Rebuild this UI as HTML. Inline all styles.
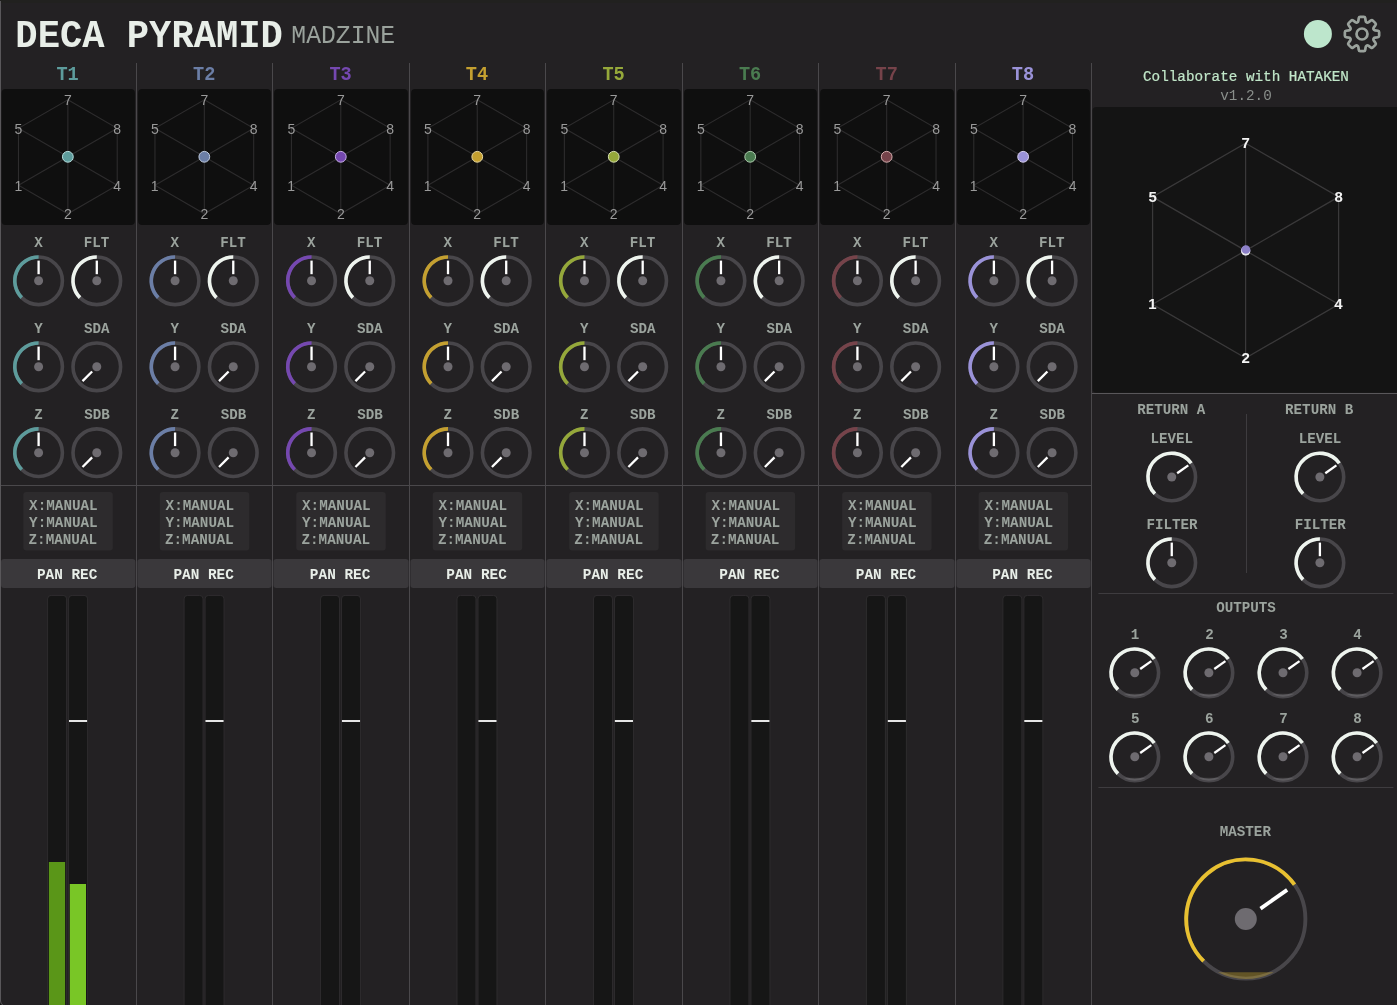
<!DOCTYPE html><html><head><meta charset="utf-8"><style>html,body{margin:0;padding:0;background:#232123;overflow:hidden;width:1397px;height:1005px}svg{display:block;will-change:transform}</style></head><body><svg width="1397" height="1005" viewBox="0 0 1397 1005"><rect x="0" y="0" width="1397" height="1005" fill="#232123"/><rect x="0" y="0" width="1397" height="3" fill="#21211f"/><path d="M0 1001 Q0.5 1005 3 1005 H0Z" fill="#111"/><path d="M0.5 1 V1001 Q0.8 1004.6 3 1005.2" fill="none" stroke="#59575a" stroke-width="1"/><text transform="translate(15.35 46.80) scale(1 1.046)" font-family="Liberation Mono" font-size="37.16" font-weight="bold" fill="#e8eee8">DECA PYRAMID</text><text transform="translate(291.34 42.90) scale(1 1.050)" font-family="Liberation Mono" font-size="24.72" font-weight="normal" fill="#9aa29c">MADZINE</text><circle cx="1317.9" cy="34" r="14" fill="#bde6cc"/><path d="M1357.50 22.37Q1358.14 22.11 1358.33 20.93L1358.79 18.05Q1358.98 16.86 1360.18 16.86L1363.82 16.86Q1365.02 16.86 1365.21 18.05L1365.67 20.93Q1365.86 22.11 1366.50 22.37L1367.04 22.60Q1367.67 22.86 1368.65 22.16L1371.01 20.45Q1371.98 19.75 1372.83 20.60L1375.40 23.17Q1376.25 24.02 1375.55 24.99L1373.84 27.35Q1373.14 28.33 1373.40 28.96L1373.63 29.50Q1373.89 30.14 1375.07 30.33L1377.95 30.79Q1379.14 30.98 1379.14 32.18L1379.14 35.82Q1379.14 37.02 1377.95 37.21L1375.07 37.67Q1373.89 37.86 1373.63 38.50L1373.40 39.04Q1373.14 39.67 1373.84 40.65L1375.55 43.01Q1376.25 43.98 1375.40 44.83L1372.83 47.40Q1371.98 48.25 1371.01 47.55L1368.65 45.84Q1367.67 45.14 1367.04 45.40L1366.50 45.63Q1365.86 45.89 1365.67 47.07L1365.21 49.95Q1365.02 51.14 1363.82 51.14L1360.18 51.14Q1358.98 51.14 1358.79 49.95L1358.33 47.07Q1358.14 45.89 1357.50 45.63L1356.96 45.40Q1356.33 45.14 1355.35 45.84L1352.99 47.55Q1352.02 48.25 1351.17 47.40L1348.60 44.83Q1347.75 43.98 1348.45 43.01L1350.16 40.65Q1350.86 39.67 1350.60 39.04L1350.37 38.50Q1350.11 37.86 1348.93 37.67L1346.05 37.21Q1344.86 37.02 1344.86 35.82L1344.86 32.18Q1344.86 30.98 1346.05 30.79L1348.93 30.33Q1350.11 30.14 1350.37 29.50L1350.60 28.96Q1350.86 28.33 1350.16 27.35L1348.45 24.99Q1347.75 24.02 1348.60 23.17L1351.17 20.60Q1352.02 19.75 1352.99 20.45L1355.35 22.16Q1356.33 22.86 1356.96 22.60Z" fill="none" stroke="#9aa29c" stroke-width="2.7" stroke-linejoin="round"/><circle cx="1362" cy="34" r="5.5" fill="none" stroke="#9aa29c" stroke-width="2.7"/><rect x="136" y="63" width="1" height="942" fill="#4a484b"/><text transform="translate(56.46 79.80) scale(1.0 1.070)" font-family="Liberation Mono" font-size="18.60" font-weight="bold" fill="#5d9c9c" >T1</text><rect x="1.60" y="89" width="133.30" height="136" rx="4" fill="#0f0f0f"/><polygon points="67.85,99.80 117.21,128.30 117.21,185.30 67.85,213.80 18.49,185.30 18.49,128.30" fill="none" stroke="#2d2c2d" stroke-width="1.1"/><line x1="67.85" y1="156.80" x2="67.85" y2="99.80" stroke="#2d2c2d" stroke-width="1.1"/><line x1="67.85" y1="156.80" x2="117.21" y2="128.30" stroke="#2d2c2d" stroke-width="1.1"/><line x1="67.85" y1="156.80" x2="117.21" y2="185.30" stroke="#2d2c2d" stroke-width="1.1"/><line x1="67.85" y1="156.80" x2="67.85" y2="213.80" stroke="#2d2c2d" stroke-width="1.1"/><line x1="67.85" y1="156.80" x2="18.49" y2="185.30" stroke="#2d2c2d" stroke-width="1.1"/><line x1="67.85" y1="156.80" x2="18.49" y2="128.30" stroke="#2d2c2d" stroke-width="1.1"/><text transform="translate(63.95 105.12) scale(1.0 1.000)" font-family="Liberation Sans" font-size="14.00" font-weight="normal" fill="#9a9a9a" >7</text><text transform="translate(113.32 133.62) scale(1.0 1.000)" font-family="Liberation Sans" font-size="14.00" font-weight="normal" fill="#9a9a9a" >8</text><text transform="translate(113.36 190.62) scale(1.0 1.000)" font-family="Liberation Sans" font-size="14.00" font-weight="normal" fill="#9a9a9a" >4</text><text transform="translate(63.96 219.12) scale(1.0 1.000)" font-family="Liberation Sans" font-size="14.00" font-weight="normal" fill="#9a9a9a" >2</text><text transform="translate(14.40 190.62) scale(1.0 1.000)" font-family="Liberation Sans" font-size="14.00" font-weight="normal" fill="#9a9a9a" >1</text><text transform="translate(14.61 133.62) scale(1.0 1.000)" font-family="Liberation Sans" font-size="14.00" font-weight="normal" fill="#9a9a9a" >5</text><circle cx="67.85" cy="156.80" r="5.4" fill="#5d9c9c" stroke="#b8e0e0" stroke-width="1"/><text transform="translate(34.14 246.80) scale(1.0 1.060)" font-family="Liberation Mono" font-size="14.20" font-weight="bold" fill="#9ba39d" >X</text><text transform="translate(83.80 246.80) scale(1.0 1.060)" font-family="Liberation Mono" font-size="14.20" font-weight="bold" fill="#9ba39d" >FLT</text><circle cx="38.60" cy="280.80" r="23.8" fill="none" stroke="#48464a" stroke-width="3.6"/><path d="M21.77 297.63A23.8 23.8 0 0 1 38.60 257.00" fill="none" stroke="#5d9c9c" stroke-width="3.6"/><line x1="38.60" y1="274.20" x2="38.60" y2="260.60" stroke="#fff" stroke-width="2.3"/><circle cx="38.60" cy="280.80" r="4.5" fill="#6e6b70"/><circle cx="96.80" cy="280.80" r="23.8" fill="none" stroke="#48464a" stroke-width="3.6"/><path d="M79.97 297.63A23.8 23.8 0 0 1 96.80 257.00" fill="none" stroke="#eef4ee" stroke-width="3.6"/><line x1="96.80" y1="274.20" x2="96.80" y2="260.60" stroke="#fff" stroke-width="2.3"/><circle cx="96.80" cy="280.80" r="4.5" fill="#6e6b70"/><text transform="translate(34.14 332.80) scale(1.0 1.060)" font-family="Liberation Mono" font-size="14.20" font-weight="bold" fill="#9ba39d" >Y</text><text transform="translate(84.04 332.80) scale(1.0 1.060)" font-family="Liberation Mono" font-size="14.20" font-weight="bold" fill="#9ba39d" >SDA</text><circle cx="38.60" cy="366.80" r="23.8" fill="none" stroke="#48464a" stroke-width="3.6"/><path d="M21.77 383.63A23.8 23.8 0 0 1 38.60 343.00" fill="none" stroke="#5d9c9c" stroke-width="3.6"/><line x1="38.60" y1="360.20" x2="38.60" y2="346.60" stroke="#fff" stroke-width="2.3"/><circle cx="38.60" cy="366.80" r="4.5" fill="#6e6b70"/><circle cx="96.80" cy="366.80" r="23.8" fill="none" stroke="#48464a" stroke-width="3.6"/><line x1="92.13" y1="371.47" x2="82.52" y2="381.08" stroke="#fff" stroke-width="2.3"/><circle cx="96.80" cy="366.80" r="4.5" fill="#6e6b70"/><text transform="translate(34.15 418.80) scale(1.0 1.060)" font-family="Liberation Mono" font-size="14.20" font-weight="bold" fill="#9ba39d" >Z</text><text transform="translate(84.19 418.80) scale(1.0 1.060)" font-family="Liberation Mono" font-size="14.20" font-weight="bold" fill="#9ba39d" >SDB</text><circle cx="38.60" cy="452.70" r="23.8" fill="none" stroke="#48464a" stroke-width="3.6"/><path d="M21.77 469.53A23.8 23.8 0 0 1 38.60 428.90" fill="none" stroke="#5d9c9c" stroke-width="3.6"/><line x1="38.60" y1="446.10" x2="38.60" y2="432.50" stroke="#fff" stroke-width="2.3"/><circle cx="38.60" cy="452.70" r="4.5" fill="#6e6b70"/><circle cx="96.80" cy="452.70" r="23.8" fill="none" stroke="#48464a" stroke-width="3.6"/><line x1="92.13" y1="457.37" x2="82.52" y2="466.98" stroke="#fff" stroke-width="2.3"/><circle cx="96.80" cy="452.70" r="4.5" fill="#6e6b70"/><rect x="23.30" y="492" width="89.5" height="58.5" rx="3" fill="#2d2b2d"/><text transform="translate(29.10 510.10) scale(1.0 1.070)" font-family="Liberation Mono" font-size="14.30" font-weight="bold" fill="#9ba39d" >X:MANUAL</text><text transform="translate(29.08 527.15) scale(1.0 1.070)" font-family="Liberation Mono" font-size="14.30" font-weight="bold" fill="#9ba39d" >Y:MANUAL</text><text transform="translate(28.49 544.20) scale(1.0 1.070)" font-family="Liberation Mono" font-size="14.30" font-weight="bold" fill="#9ba39d" >Z:MANUAL</text><rect x="1.00" y="559" width="134.40" height="29" rx="3" fill="#3a383b"/><text transform="translate(36.93 578.90) scale(1.0 1.030)" font-family="Liberation Mono" font-size="14.40" font-weight="bold" fill="#e8eee8" >PAN REC</text><rect x="47.60" y="595.4" width="19" height="420" rx="3.5" fill="#161616" stroke="#2e2c2e" stroke-width="1"/><rect x="68.60" y="595.4" width="19" height="420" rx="3.5" fill="#161616" stroke="#2e2c2e" stroke-width="1"/><rect x="69.00" y="720" width="18.1" height="2" fill="#e6e6e6"/><rect x="272" y="63" width="1" height="942" fill="#4a484b"/><text transform="translate(193.08 79.80) scale(1.0 1.070)" font-family="Liberation Mono" font-size="18.60" font-weight="bold" fill="#6b7ea6" >T2</text><rect x="138.10" y="89" width="132.80" height="136" rx="4" fill="#0f0f0f"/><polygon points="204.32,99.80 253.68,128.30 253.68,185.30 204.32,213.80 154.96,185.30 154.96,128.30" fill="none" stroke="#2d2c2d" stroke-width="1.1"/><line x1="204.32" y1="156.80" x2="204.32" y2="99.80" stroke="#2d2c2d" stroke-width="1.1"/><line x1="204.32" y1="156.80" x2="253.68" y2="128.30" stroke="#2d2c2d" stroke-width="1.1"/><line x1="204.32" y1="156.80" x2="253.68" y2="185.30" stroke="#2d2c2d" stroke-width="1.1"/><line x1="204.32" y1="156.80" x2="204.32" y2="213.80" stroke="#2d2c2d" stroke-width="1.1"/><line x1="204.32" y1="156.80" x2="154.96" y2="185.30" stroke="#2d2c2d" stroke-width="1.1"/><line x1="204.32" y1="156.80" x2="154.96" y2="128.30" stroke="#2d2c2d" stroke-width="1.1"/><text transform="translate(200.42 105.12) scale(1.0 1.000)" font-family="Liberation Sans" font-size="14.00" font-weight="normal" fill="#9a9a9a" >7</text><text transform="translate(249.79 133.62) scale(1.0 1.000)" font-family="Liberation Sans" font-size="14.00" font-weight="normal" fill="#9a9a9a" >8</text><text transform="translate(249.83 190.62) scale(1.0 1.000)" font-family="Liberation Sans" font-size="14.00" font-weight="normal" fill="#9a9a9a" >4</text><text transform="translate(200.43 219.12) scale(1.0 1.000)" font-family="Liberation Sans" font-size="14.00" font-weight="normal" fill="#9a9a9a" >2</text><text transform="translate(150.87 190.62) scale(1.0 1.000)" font-family="Liberation Sans" font-size="14.00" font-weight="normal" fill="#9a9a9a" >1</text><text transform="translate(151.08 133.62) scale(1.0 1.000)" font-family="Liberation Sans" font-size="14.00" font-weight="normal" fill="#9a9a9a" >5</text><circle cx="204.32" cy="156.80" r="5.4" fill="#6b7ea6" stroke="#c0cce0" stroke-width="1"/><text transform="translate(170.61 246.80) scale(1.0 1.060)" font-family="Liberation Mono" font-size="14.20" font-weight="bold" fill="#9ba39d" >X</text><text transform="translate(220.27 246.80) scale(1.0 1.060)" font-family="Liberation Mono" font-size="14.20" font-weight="bold" fill="#9ba39d" >FLT</text><circle cx="175.07" cy="280.80" r="23.8" fill="none" stroke="#48464a" stroke-width="3.6"/><path d="M158.24 297.63A23.8 23.8 0 0 1 175.07 257.00" fill="none" stroke="#6b7ea6" stroke-width="3.6"/><line x1="175.07" y1="274.20" x2="175.07" y2="260.60" stroke="#fff" stroke-width="2.3"/><circle cx="175.07" cy="280.80" r="4.5" fill="#6e6b70"/><circle cx="233.27" cy="280.80" r="23.8" fill="none" stroke="#48464a" stroke-width="3.6"/><path d="M216.44 297.63A23.8 23.8 0 0 1 233.27 257.00" fill="none" stroke="#eef4ee" stroke-width="3.6"/><line x1="233.27" y1="274.20" x2="233.27" y2="260.60" stroke="#fff" stroke-width="2.3"/><circle cx="233.27" cy="280.80" r="4.5" fill="#6e6b70"/><text transform="translate(170.61 332.80) scale(1.0 1.060)" font-family="Liberation Mono" font-size="14.20" font-weight="bold" fill="#9ba39d" >Y</text><text transform="translate(220.51 332.80) scale(1.0 1.060)" font-family="Liberation Mono" font-size="14.20" font-weight="bold" fill="#9ba39d" >SDA</text><circle cx="175.07" cy="366.80" r="23.8" fill="none" stroke="#48464a" stroke-width="3.6"/><path d="M158.24 383.63A23.8 23.8 0 0 1 175.07 343.00" fill="none" stroke="#6b7ea6" stroke-width="3.6"/><line x1="175.07" y1="360.20" x2="175.07" y2="346.60" stroke="#fff" stroke-width="2.3"/><circle cx="175.07" cy="366.80" r="4.5" fill="#6e6b70"/><circle cx="233.27" cy="366.80" r="23.8" fill="none" stroke="#48464a" stroke-width="3.6"/><line x1="228.60" y1="371.47" x2="218.99" y2="381.08" stroke="#fff" stroke-width="2.3"/><circle cx="233.27" cy="366.80" r="4.5" fill="#6e6b70"/><text transform="translate(170.62 418.80) scale(1.0 1.060)" font-family="Liberation Mono" font-size="14.20" font-weight="bold" fill="#9ba39d" >Z</text><text transform="translate(220.66 418.80) scale(1.0 1.060)" font-family="Liberation Mono" font-size="14.20" font-weight="bold" fill="#9ba39d" >SDB</text><circle cx="175.07" cy="452.70" r="23.8" fill="none" stroke="#48464a" stroke-width="3.6"/><path d="M158.24 469.53A23.8 23.8 0 0 1 175.07 428.90" fill="none" stroke="#6b7ea6" stroke-width="3.6"/><line x1="175.07" y1="446.10" x2="175.07" y2="432.50" stroke="#fff" stroke-width="2.3"/><circle cx="175.07" cy="452.70" r="4.5" fill="#6e6b70"/><circle cx="233.27" cy="452.70" r="23.8" fill="none" stroke="#48464a" stroke-width="3.6"/><line x1="228.60" y1="457.37" x2="218.99" y2="466.98" stroke="#fff" stroke-width="2.3"/><circle cx="233.27" cy="452.70" r="4.5" fill="#6e6b70"/><rect x="159.77" y="492" width="89.5" height="58.5" rx="3" fill="#2d2b2d"/><text transform="translate(165.57 510.10) scale(1.0 1.070)" font-family="Liberation Mono" font-size="14.30" font-weight="bold" fill="#9ba39d" >X:MANUAL</text><text transform="translate(165.55 527.15) scale(1.0 1.070)" font-family="Liberation Mono" font-size="14.30" font-weight="bold" fill="#9ba39d" >Y:MANUAL</text><text transform="translate(164.96 544.20) scale(1.0 1.070)" font-family="Liberation Mono" font-size="14.30" font-weight="bold" fill="#9ba39d" >Z:MANUAL</text><rect x="137.40" y="559" width="134.20" height="29" rx="3" fill="#3a383b"/><text transform="translate(173.40 578.90) scale(1.0 1.030)" font-family="Liberation Mono" font-size="14.40" font-weight="bold" fill="#e8eee8" >PAN REC</text><rect x="184.07" y="595.4" width="19" height="420" rx="3.5" fill="#161616" stroke="#2e2c2e" stroke-width="1"/><rect x="205.07" y="595.4" width="19" height="420" rx="3.5" fill="#161616" stroke="#2e2c2e" stroke-width="1"/><rect x="205.47" y="720" width="18.1" height="2" fill="#e6e6e6"/><rect x="409" y="63" width="1" height="942" fill="#4a484b"/><text transform="translate(329.47 79.80) scale(1.0 1.070)" font-family="Liberation Mono" font-size="18.60" font-weight="bold" fill="#7548b0" >T3</text><rect x="274.10" y="89" width="133.80" height="136" rx="4" fill="#0f0f0f"/><polygon points="340.79,99.80 390.15,128.30 390.15,185.30 340.79,213.80 291.43,185.30 291.43,128.30" fill="none" stroke="#2d2c2d" stroke-width="1.1"/><line x1="340.79" y1="156.80" x2="340.79" y2="99.80" stroke="#2d2c2d" stroke-width="1.1"/><line x1="340.79" y1="156.80" x2="390.15" y2="128.30" stroke="#2d2c2d" stroke-width="1.1"/><line x1="340.79" y1="156.80" x2="390.15" y2="185.30" stroke="#2d2c2d" stroke-width="1.1"/><line x1="340.79" y1="156.80" x2="340.79" y2="213.80" stroke="#2d2c2d" stroke-width="1.1"/><line x1="340.79" y1="156.80" x2="291.43" y2="185.30" stroke="#2d2c2d" stroke-width="1.1"/><line x1="340.79" y1="156.80" x2="291.43" y2="128.30" stroke="#2d2c2d" stroke-width="1.1"/><text transform="translate(336.89 105.12) scale(1.0 1.000)" font-family="Liberation Sans" font-size="14.00" font-weight="normal" fill="#9a9a9a" >7</text><text transform="translate(386.26 133.62) scale(1.0 1.000)" font-family="Liberation Sans" font-size="14.00" font-weight="normal" fill="#9a9a9a" >8</text><text transform="translate(386.30 190.62) scale(1.0 1.000)" font-family="Liberation Sans" font-size="14.00" font-weight="normal" fill="#9a9a9a" >4</text><text transform="translate(336.90 219.12) scale(1.0 1.000)" font-family="Liberation Sans" font-size="14.00" font-weight="normal" fill="#9a9a9a" >2</text><text transform="translate(287.34 190.62) scale(1.0 1.000)" font-family="Liberation Sans" font-size="14.00" font-weight="normal" fill="#9a9a9a" >1</text><text transform="translate(287.55 133.62) scale(1.0 1.000)" font-family="Liberation Sans" font-size="14.00" font-weight="normal" fill="#9a9a9a" >5</text><circle cx="340.79" cy="156.80" r="5.4" fill="#7548b0" stroke="#c8b0e8" stroke-width="1"/><text transform="translate(307.08 246.80) scale(1.0 1.060)" font-family="Liberation Mono" font-size="14.20" font-weight="bold" fill="#9ba39d" >X</text><text transform="translate(356.74 246.80) scale(1.0 1.060)" font-family="Liberation Mono" font-size="14.20" font-weight="bold" fill="#9ba39d" >FLT</text><circle cx="311.54" cy="280.80" r="23.8" fill="none" stroke="#48464a" stroke-width="3.6"/><path d="M294.71 297.63A23.8 23.8 0 0 1 311.54 257.00" fill="none" stroke="#7548b0" stroke-width="3.6"/><line x1="311.54" y1="274.20" x2="311.54" y2="260.60" stroke="#fff" stroke-width="2.3"/><circle cx="311.54" cy="280.80" r="4.5" fill="#6e6b70"/><circle cx="369.74" cy="280.80" r="23.8" fill="none" stroke="#48464a" stroke-width="3.6"/><path d="M352.91 297.63A23.8 23.8 0 0 1 369.74 257.00" fill="none" stroke="#eef4ee" stroke-width="3.6"/><line x1="369.74" y1="274.20" x2="369.74" y2="260.60" stroke="#fff" stroke-width="2.3"/><circle cx="369.74" cy="280.80" r="4.5" fill="#6e6b70"/><text transform="translate(307.08 332.80) scale(1.0 1.060)" font-family="Liberation Mono" font-size="14.20" font-weight="bold" fill="#9ba39d" >Y</text><text transform="translate(356.98 332.80) scale(1.0 1.060)" font-family="Liberation Mono" font-size="14.20" font-weight="bold" fill="#9ba39d" >SDA</text><circle cx="311.54" cy="366.80" r="23.8" fill="none" stroke="#48464a" stroke-width="3.6"/><path d="M294.71 383.63A23.8 23.8 0 0 1 311.54 343.00" fill="none" stroke="#7548b0" stroke-width="3.6"/><line x1="311.54" y1="360.20" x2="311.54" y2="346.60" stroke="#fff" stroke-width="2.3"/><circle cx="311.54" cy="366.80" r="4.5" fill="#6e6b70"/><circle cx="369.74" cy="366.80" r="23.8" fill="none" stroke="#48464a" stroke-width="3.6"/><line x1="365.07" y1="371.47" x2="355.46" y2="381.08" stroke="#fff" stroke-width="2.3"/><circle cx="369.74" cy="366.80" r="4.5" fill="#6e6b70"/><text transform="translate(307.09 418.80) scale(1.0 1.060)" font-family="Liberation Mono" font-size="14.20" font-weight="bold" fill="#9ba39d" >Z</text><text transform="translate(357.13 418.80) scale(1.0 1.060)" font-family="Liberation Mono" font-size="14.20" font-weight="bold" fill="#9ba39d" >SDB</text><circle cx="311.54" cy="452.70" r="23.8" fill="none" stroke="#48464a" stroke-width="3.6"/><path d="M294.71 469.53A23.8 23.8 0 0 1 311.54 428.90" fill="none" stroke="#7548b0" stroke-width="3.6"/><line x1="311.54" y1="446.10" x2="311.54" y2="432.50" stroke="#fff" stroke-width="2.3"/><circle cx="311.54" cy="452.70" r="4.5" fill="#6e6b70"/><circle cx="369.74" cy="452.70" r="23.8" fill="none" stroke="#48464a" stroke-width="3.6"/><line x1="365.07" y1="457.37" x2="355.46" y2="466.98" stroke="#fff" stroke-width="2.3"/><circle cx="369.74" cy="452.70" r="4.5" fill="#6e6b70"/><rect x="296.24" y="492" width="89.5" height="58.5" rx="3" fill="#2d2b2d"/><text transform="translate(302.04 510.10) scale(1.0 1.070)" font-family="Liberation Mono" font-size="14.30" font-weight="bold" fill="#9ba39d" >X:MANUAL</text><text transform="translate(302.02 527.15) scale(1.0 1.070)" font-family="Liberation Mono" font-size="14.30" font-weight="bold" fill="#9ba39d" >Y:MANUAL</text><text transform="translate(301.43 544.20) scale(1.0 1.070)" font-family="Liberation Mono" font-size="14.30" font-weight="bold" fill="#9ba39d" >Z:MANUAL</text><rect x="273.40" y="559" width="135.20" height="29" rx="3" fill="#3a383b"/><text transform="translate(309.87 578.90) scale(1.0 1.030)" font-family="Liberation Mono" font-size="14.40" font-weight="bold" fill="#e8eee8" >PAN REC</text><rect x="320.54" y="595.4" width="19" height="420" rx="3.5" fill="#161616" stroke="#2e2c2e" stroke-width="1"/><rect x="341.54" y="595.4" width="19" height="420" rx="3.5" fill="#161616" stroke="#2e2c2e" stroke-width="1"/><rect x="341.94" y="720" width="18.1" height="2" fill="#e6e6e6"/><rect x="545" y="63" width="1" height="942" fill="#4a484b"/><text transform="translate(465.75 79.80) scale(1.0 1.070)" font-family="Liberation Mono" font-size="18.60" font-weight="bold" fill="#c4a030" >T4</text><rect x="411.10" y="89" width="132.80" height="136" rx="4" fill="#0f0f0f"/><polygon points="477.26,99.80 526.62,128.30 526.62,185.30 477.26,213.80 427.90,185.30 427.90,128.30" fill="none" stroke="#2d2c2d" stroke-width="1.1"/><line x1="477.26" y1="156.80" x2="477.26" y2="99.80" stroke="#2d2c2d" stroke-width="1.1"/><line x1="477.26" y1="156.80" x2="526.62" y2="128.30" stroke="#2d2c2d" stroke-width="1.1"/><line x1="477.26" y1="156.80" x2="526.62" y2="185.30" stroke="#2d2c2d" stroke-width="1.1"/><line x1="477.26" y1="156.80" x2="477.26" y2="213.80" stroke="#2d2c2d" stroke-width="1.1"/><line x1="477.26" y1="156.80" x2="427.90" y2="185.30" stroke="#2d2c2d" stroke-width="1.1"/><line x1="477.26" y1="156.80" x2="427.90" y2="128.30" stroke="#2d2c2d" stroke-width="1.1"/><text transform="translate(473.36 105.12) scale(1.0 1.000)" font-family="Liberation Sans" font-size="14.00" font-weight="normal" fill="#9a9a9a" >7</text><text transform="translate(522.73 133.62) scale(1.0 1.000)" font-family="Liberation Sans" font-size="14.00" font-weight="normal" fill="#9a9a9a" >8</text><text transform="translate(522.77 190.62) scale(1.0 1.000)" font-family="Liberation Sans" font-size="14.00" font-weight="normal" fill="#9a9a9a" >4</text><text transform="translate(473.37 219.12) scale(1.0 1.000)" font-family="Liberation Sans" font-size="14.00" font-weight="normal" fill="#9a9a9a" >2</text><text transform="translate(423.81 190.62) scale(1.0 1.000)" font-family="Liberation Sans" font-size="14.00" font-weight="normal" fill="#9a9a9a" >1</text><text transform="translate(424.02 133.62) scale(1.0 1.000)" font-family="Liberation Sans" font-size="14.00" font-weight="normal" fill="#9a9a9a" >5</text><circle cx="477.26" cy="156.80" r="5.4" fill="#c4a030" stroke="#e8d8a0" stroke-width="1"/><text transform="translate(443.55 246.80) scale(1.0 1.060)" font-family="Liberation Mono" font-size="14.20" font-weight="bold" fill="#9ba39d" >X</text><text transform="translate(493.21 246.80) scale(1.0 1.060)" font-family="Liberation Mono" font-size="14.20" font-weight="bold" fill="#9ba39d" >FLT</text><circle cx="448.01" cy="280.80" r="23.8" fill="none" stroke="#48464a" stroke-width="3.6"/><path d="M431.18 297.63A23.8 23.8 0 0 1 448.01 257.00" fill="none" stroke="#c4a030" stroke-width="3.6"/><line x1="448.01" y1="274.20" x2="448.01" y2="260.60" stroke="#fff" stroke-width="2.3"/><circle cx="448.01" cy="280.80" r="4.5" fill="#6e6b70"/><circle cx="506.21" cy="280.80" r="23.8" fill="none" stroke="#48464a" stroke-width="3.6"/><path d="M489.38 297.63A23.8 23.8 0 0 1 506.21 257.00" fill="none" stroke="#eef4ee" stroke-width="3.6"/><line x1="506.21" y1="274.20" x2="506.21" y2="260.60" stroke="#fff" stroke-width="2.3"/><circle cx="506.21" cy="280.80" r="4.5" fill="#6e6b70"/><text transform="translate(443.55 332.80) scale(1.0 1.060)" font-family="Liberation Mono" font-size="14.20" font-weight="bold" fill="#9ba39d" >Y</text><text transform="translate(493.45 332.80) scale(1.0 1.060)" font-family="Liberation Mono" font-size="14.20" font-weight="bold" fill="#9ba39d" >SDA</text><circle cx="448.01" cy="366.80" r="23.8" fill="none" stroke="#48464a" stroke-width="3.6"/><path d="M431.18 383.63A23.8 23.8 0 0 1 448.01 343.00" fill="none" stroke="#c4a030" stroke-width="3.6"/><line x1="448.01" y1="360.20" x2="448.01" y2="346.60" stroke="#fff" stroke-width="2.3"/><circle cx="448.01" cy="366.80" r="4.5" fill="#6e6b70"/><circle cx="506.21" cy="366.80" r="23.8" fill="none" stroke="#48464a" stroke-width="3.6"/><line x1="501.54" y1="371.47" x2="491.93" y2="381.08" stroke="#fff" stroke-width="2.3"/><circle cx="506.21" cy="366.80" r="4.5" fill="#6e6b70"/><text transform="translate(443.56 418.80) scale(1.0 1.060)" font-family="Liberation Mono" font-size="14.20" font-weight="bold" fill="#9ba39d" >Z</text><text transform="translate(493.60 418.80) scale(1.0 1.060)" font-family="Liberation Mono" font-size="14.20" font-weight="bold" fill="#9ba39d" >SDB</text><circle cx="448.01" cy="452.70" r="23.8" fill="none" stroke="#48464a" stroke-width="3.6"/><path d="M431.18 469.53A23.8 23.8 0 0 1 448.01 428.90" fill="none" stroke="#c4a030" stroke-width="3.6"/><line x1="448.01" y1="446.10" x2="448.01" y2="432.50" stroke="#fff" stroke-width="2.3"/><circle cx="448.01" cy="452.70" r="4.5" fill="#6e6b70"/><circle cx="506.21" cy="452.70" r="23.8" fill="none" stroke="#48464a" stroke-width="3.6"/><line x1="501.54" y1="457.37" x2="491.93" y2="466.98" stroke="#fff" stroke-width="2.3"/><circle cx="506.21" cy="452.70" r="4.5" fill="#6e6b70"/><rect x="432.71" y="492" width="89.5" height="58.5" rx="3" fill="#2d2b2d"/><text transform="translate(438.51 510.10) scale(1.0 1.070)" font-family="Liberation Mono" font-size="14.30" font-weight="bold" fill="#9ba39d" >X:MANUAL</text><text transform="translate(438.49 527.15) scale(1.0 1.070)" font-family="Liberation Mono" font-size="14.30" font-weight="bold" fill="#9ba39d" >Y:MANUAL</text><text transform="translate(437.90 544.20) scale(1.0 1.070)" font-family="Liberation Mono" font-size="14.30" font-weight="bold" fill="#9ba39d" >Z:MANUAL</text><rect x="410.40" y="559" width="134.20" height="29" rx="3" fill="#3a383b"/><text transform="translate(446.34 578.90) scale(1.0 1.030)" font-family="Liberation Mono" font-size="14.40" font-weight="bold" fill="#e8eee8" >PAN REC</text><rect x="457.01" y="595.4" width="19" height="420" rx="3.5" fill="#161616" stroke="#2e2c2e" stroke-width="1"/><rect x="478.01" y="595.4" width="19" height="420" rx="3.5" fill="#161616" stroke="#2e2c2e" stroke-width="1"/><rect x="478.41" y="720" width="18.1" height="2" fill="#e6e6e6"/><rect x="682" y="63" width="1" height="942" fill="#4a484b"/><text transform="translate(602.42 79.80) scale(1.0 1.070)" font-family="Liberation Mono" font-size="18.60" font-weight="bold" fill="#95a83a" >T5</text><rect x="547.10" y="89" width="133.80" height="136" rx="4" fill="#0f0f0f"/><polygon points="613.73,99.80 663.09,128.30 663.09,185.30 613.73,213.80 564.37,185.30 564.37,128.30" fill="none" stroke="#2d2c2d" stroke-width="1.1"/><line x1="613.73" y1="156.80" x2="613.73" y2="99.80" stroke="#2d2c2d" stroke-width="1.1"/><line x1="613.73" y1="156.80" x2="663.09" y2="128.30" stroke="#2d2c2d" stroke-width="1.1"/><line x1="613.73" y1="156.80" x2="663.09" y2="185.30" stroke="#2d2c2d" stroke-width="1.1"/><line x1="613.73" y1="156.80" x2="613.73" y2="213.80" stroke="#2d2c2d" stroke-width="1.1"/><line x1="613.73" y1="156.80" x2="564.37" y2="185.30" stroke="#2d2c2d" stroke-width="1.1"/><line x1="613.73" y1="156.80" x2="564.37" y2="128.30" stroke="#2d2c2d" stroke-width="1.1"/><text transform="translate(609.83 105.12) scale(1.0 1.000)" font-family="Liberation Sans" font-size="14.00" font-weight="normal" fill="#9a9a9a" >7</text><text transform="translate(659.20 133.62) scale(1.0 1.000)" font-family="Liberation Sans" font-size="14.00" font-weight="normal" fill="#9a9a9a" >8</text><text transform="translate(659.24 190.62) scale(1.0 1.000)" font-family="Liberation Sans" font-size="14.00" font-weight="normal" fill="#9a9a9a" >4</text><text transform="translate(609.84 219.12) scale(1.0 1.000)" font-family="Liberation Sans" font-size="14.00" font-weight="normal" fill="#9a9a9a" >2</text><text transform="translate(560.28 190.62) scale(1.0 1.000)" font-family="Liberation Sans" font-size="14.00" font-weight="normal" fill="#9a9a9a" >1</text><text transform="translate(560.49 133.62) scale(1.0 1.000)" font-family="Liberation Sans" font-size="14.00" font-weight="normal" fill="#9a9a9a" >5</text><circle cx="613.73" cy="156.80" r="5.4" fill="#95a83a" stroke="#d8e0b0" stroke-width="1"/><text transform="translate(580.02 246.80) scale(1.0 1.060)" font-family="Liberation Mono" font-size="14.20" font-weight="bold" fill="#9ba39d" >X</text><text transform="translate(629.68 246.80) scale(1.0 1.060)" font-family="Liberation Mono" font-size="14.20" font-weight="bold" fill="#9ba39d" >FLT</text><circle cx="584.48" cy="280.80" r="23.8" fill="none" stroke="#48464a" stroke-width="3.6"/><path d="M567.65 297.63A23.8 23.8 0 0 1 584.48 257.00" fill="none" stroke="#95a83a" stroke-width="3.6"/><line x1="584.48" y1="274.20" x2="584.48" y2="260.60" stroke="#fff" stroke-width="2.3"/><circle cx="584.48" cy="280.80" r="4.5" fill="#6e6b70"/><circle cx="642.68" cy="280.80" r="23.8" fill="none" stroke="#48464a" stroke-width="3.6"/><path d="M625.85 297.63A23.8 23.8 0 0 1 642.68 257.00" fill="none" stroke="#eef4ee" stroke-width="3.6"/><line x1="642.68" y1="274.20" x2="642.68" y2="260.60" stroke="#fff" stroke-width="2.3"/><circle cx="642.68" cy="280.80" r="4.5" fill="#6e6b70"/><text transform="translate(580.02 332.80) scale(1.0 1.060)" font-family="Liberation Mono" font-size="14.20" font-weight="bold" fill="#9ba39d" >Y</text><text transform="translate(629.92 332.80) scale(1.0 1.060)" font-family="Liberation Mono" font-size="14.20" font-weight="bold" fill="#9ba39d" >SDA</text><circle cx="584.48" cy="366.80" r="23.8" fill="none" stroke="#48464a" stroke-width="3.6"/><path d="M567.65 383.63A23.8 23.8 0 0 1 584.48 343.00" fill="none" stroke="#95a83a" stroke-width="3.6"/><line x1="584.48" y1="360.20" x2="584.48" y2="346.60" stroke="#fff" stroke-width="2.3"/><circle cx="584.48" cy="366.80" r="4.5" fill="#6e6b70"/><circle cx="642.68" cy="366.80" r="23.8" fill="none" stroke="#48464a" stroke-width="3.6"/><line x1="638.01" y1="371.47" x2="628.40" y2="381.08" stroke="#fff" stroke-width="2.3"/><circle cx="642.68" cy="366.80" r="4.5" fill="#6e6b70"/><text transform="translate(580.03 418.80) scale(1.0 1.060)" font-family="Liberation Mono" font-size="14.20" font-weight="bold" fill="#9ba39d" >Z</text><text transform="translate(630.07 418.80) scale(1.0 1.060)" font-family="Liberation Mono" font-size="14.20" font-weight="bold" fill="#9ba39d" >SDB</text><circle cx="584.48" cy="452.70" r="23.8" fill="none" stroke="#48464a" stroke-width="3.6"/><path d="M567.65 469.53A23.8 23.8 0 0 1 584.48 428.90" fill="none" stroke="#95a83a" stroke-width="3.6"/><line x1="584.48" y1="446.10" x2="584.48" y2="432.50" stroke="#fff" stroke-width="2.3"/><circle cx="584.48" cy="452.70" r="4.5" fill="#6e6b70"/><circle cx="642.68" cy="452.70" r="23.8" fill="none" stroke="#48464a" stroke-width="3.6"/><line x1="638.01" y1="457.37" x2="628.40" y2="466.98" stroke="#fff" stroke-width="2.3"/><circle cx="642.68" cy="452.70" r="4.5" fill="#6e6b70"/><rect x="569.18" y="492" width="89.5" height="58.5" rx="3" fill="#2d2b2d"/><text transform="translate(574.98 510.10) scale(1.0 1.070)" font-family="Liberation Mono" font-size="14.30" font-weight="bold" fill="#9ba39d" >X:MANUAL</text><text transform="translate(574.96 527.15) scale(1.0 1.070)" font-family="Liberation Mono" font-size="14.30" font-weight="bold" fill="#9ba39d" >Y:MANUAL</text><text transform="translate(574.37 544.20) scale(1.0 1.070)" font-family="Liberation Mono" font-size="14.30" font-weight="bold" fill="#9ba39d" >Z:MANUAL</text><rect x="546.40" y="559" width="135.20" height="29" rx="3" fill="#3a383b"/><text transform="translate(582.81 578.90) scale(1.0 1.030)" font-family="Liberation Mono" font-size="14.40" font-weight="bold" fill="#e8eee8" >PAN REC</text><rect x="593.48" y="595.4" width="19" height="420" rx="3.5" fill="#161616" stroke="#2e2c2e" stroke-width="1"/><rect x="614.48" y="595.4" width="19" height="420" rx="3.5" fill="#161616" stroke="#2e2c2e" stroke-width="1"/><rect x="614.88" y="720" width="18.1" height="2" fill="#e6e6e6"/><rect x="818" y="63" width="1" height="942" fill="#4a484b"/><text transform="translate(738.93 79.80) scale(1.0 1.070)" font-family="Liberation Mono" font-size="18.60" font-weight="bold" fill="#4a7b50" >T6</text><rect x="684.10" y="89" width="132.80" height="136" rx="4" fill="#0f0f0f"/><polygon points="750.20,99.80 799.56,128.30 799.56,185.30 750.20,213.80 700.84,185.30 700.84,128.30" fill="none" stroke="#2d2c2d" stroke-width="1.1"/><line x1="750.20" y1="156.80" x2="750.20" y2="99.80" stroke="#2d2c2d" stroke-width="1.1"/><line x1="750.20" y1="156.80" x2="799.56" y2="128.30" stroke="#2d2c2d" stroke-width="1.1"/><line x1="750.20" y1="156.80" x2="799.56" y2="185.30" stroke="#2d2c2d" stroke-width="1.1"/><line x1="750.20" y1="156.80" x2="750.20" y2="213.80" stroke="#2d2c2d" stroke-width="1.1"/><line x1="750.20" y1="156.80" x2="700.84" y2="185.30" stroke="#2d2c2d" stroke-width="1.1"/><line x1="750.20" y1="156.80" x2="700.84" y2="128.30" stroke="#2d2c2d" stroke-width="1.1"/><text transform="translate(746.30 105.12) scale(1.0 1.000)" font-family="Liberation Sans" font-size="14.00" font-weight="normal" fill="#9a9a9a" >7</text><text transform="translate(795.67 133.62) scale(1.0 1.000)" font-family="Liberation Sans" font-size="14.00" font-weight="normal" fill="#9a9a9a" >8</text><text transform="translate(795.71 190.62) scale(1.0 1.000)" font-family="Liberation Sans" font-size="14.00" font-weight="normal" fill="#9a9a9a" >4</text><text transform="translate(746.31 219.12) scale(1.0 1.000)" font-family="Liberation Sans" font-size="14.00" font-weight="normal" fill="#9a9a9a" >2</text><text transform="translate(696.75 190.62) scale(1.0 1.000)" font-family="Liberation Sans" font-size="14.00" font-weight="normal" fill="#9a9a9a" >1</text><text transform="translate(696.96 133.62) scale(1.0 1.000)" font-family="Liberation Sans" font-size="14.00" font-weight="normal" fill="#9a9a9a" >5</text><circle cx="750.20" cy="156.80" r="5.4" fill="#4a7b50" stroke="#b0d0b0" stroke-width="1"/><text transform="translate(716.49 246.80) scale(1.0 1.060)" font-family="Liberation Mono" font-size="14.20" font-weight="bold" fill="#9ba39d" >X</text><text transform="translate(766.15 246.80) scale(1.0 1.060)" font-family="Liberation Mono" font-size="14.20" font-weight="bold" fill="#9ba39d" >FLT</text><circle cx="720.95" cy="280.80" r="23.8" fill="none" stroke="#48464a" stroke-width="3.6"/><path d="M704.12 297.63A23.8 23.8 0 0 1 720.95 257.00" fill="none" stroke="#4a7b50" stroke-width="3.6"/><line x1="720.95" y1="274.20" x2="720.95" y2="260.60" stroke="#fff" stroke-width="2.3"/><circle cx="720.95" cy="280.80" r="4.5" fill="#6e6b70"/><circle cx="779.15" cy="280.80" r="23.8" fill="none" stroke="#48464a" stroke-width="3.6"/><path d="M762.32 297.63A23.8 23.8 0 0 1 779.15 257.00" fill="none" stroke="#eef4ee" stroke-width="3.6"/><line x1="779.15" y1="274.20" x2="779.15" y2="260.60" stroke="#fff" stroke-width="2.3"/><circle cx="779.15" cy="280.80" r="4.5" fill="#6e6b70"/><text transform="translate(716.49 332.80) scale(1.0 1.060)" font-family="Liberation Mono" font-size="14.20" font-weight="bold" fill="#9ba39d" >Y</text><text transform="translate(766.39 332.80) scale(1.0 1.060)" font-family="Liberation Mono" font-size="14.20" font-weight="bold" fill="#9ba39d" >SDA</text><circle cx="720.95" cy="366.80" r="23.8" fill="none" stroke="#48464a" stroke-width="3.6"/><path d="M704.12 383.63A23.8 23.8 0 0 1 720.95 343.00" fill="none" stroke="#4a7b50" stroke-width="3.6"/><line x1="720.95" y1="360.20" x2="720.95" y2="346.60" stroke="#fff" stroke-width="2.3"/><circle cx="720.95" cy="366.80" r="4.5" fill="#6e6b70"/><circle cx="779.15" cy="366.80" r="23.8" fill="none" stroke="#48464a" stroke-width="3.6"/><line x1="774.48" y1="371.47" x2="764.87" y2="381.08" stroke="#fff" stroke-width="2.3"/><circle cx="779.15" cy="366.80" r="4.5" fill="#6e6b70"/><text transform="translate(716.50 418.80) scale(1.0 1.060)" font-family="Liberation Mono" font-size="14.20" font-weight="bold" fill="#9ba39d" >Z</text><text transform="translate(766.54 418.80) scale(1.0 1.060)" font-family="Liberation Mono" font-size="14.20" font-weight="bold" fill="#9ba39d" >SDB</text><circle cx="720.95" cy="452.70" r="23.8" fill="none" stroke="#48464a" stroke-width="3.6"/><path d="M704.12 469.53A23.8 23.8 0 0 1 720.95 428.90" fill="none" stroke="#4a7b50" stroke-width="3.6"/><line x1="720.95" y1="446.10" x2="720.95" y2="432.50" stroke="#fff" stroke-width="2.3"/><circle cx="720.95" cy="452.70" r="4.5" fill="#6e6b70"/><circle cx="779.15" cy="452.70" r="23.8" fill="none" stroke="#48464a" stroke-width="3.6"/><line x1="774.48" y1="457.37" x2="764.87" y2="466.98" stroke="#fff" stroke-width="2.3"/><circle cx="779.15" cy="452.70" r="4.5" fill="#6e6b70"/><rect x="705.65" y="492" width="89.5" height="58.5" rx="3" fill="#2d2b2d"/><text transform="translate(711.45 510.10) scale(1.0 1.070)" font-family="Liberation Mono" font-size="14.30" font-weight="bold" fill="#9ba39d" >X:MANUAL</text><text transform="translate(711.43 527.15) scale(1.0 1.070)" font-family="Liberation Mono" font-size="14.30" font-weight="bold" fill="#9ba39d" >Y:MANUAL</text><text transform="translate(710.84 544.20) scale(1.0 1.070)" font-family="Liberation Mono" font-size="14.30" font-weight="bold" fill="#9ba39d" >Z:MANUAL</text><rect x="683.40" y="559" width="134.20" height="29" rx="3" fill="#3a383b"/><text transform="translate(719.28 578.90) scale(1.0 1.030)" font-family="Liberation Mono" font-size="14.40" font-weight="bold" fill="#e8eee8" >PAN REC</text><rect x="729.95" y="595.4" width="19" height="420" rx="3.5" fill="#161616" stroke="#2e2c2e" stroke-width="1"/><rect x="750.95" y="595.4" width="19" height="420" rx="3.5" fill="#161616" stroke="#2e2c2e" stroke-width="1"/><rect x="751.35" y="720" width="18.1" height="2" fill="#e6e6e6"/><rect x="955" y="63" width="1" height="942" fill="#4a484b"/><text transform="translate(875.50 79.80) scale(1.0 1.070)" font-family="Liberation Mono" font-size="18.60" font-weight="bold" fill="#76434a" >T7</text><rect x="820.10" y="89" width="133.80" height="136" rx="4" fill="#0f0f0f"/><polygon points="886.67,99.80 936.03,128.30 936.03,185.30 886.67,213.80 837.31,185.30 837.31,128.30" fill="none" stroke="#2d2c2d" stroke-width="1.1"/><line x1="886.67" y1="156.80" x2="886.67" y2="99.80" stroke="#2d2c2d" stroke-width="1.1"/><line x1="886.67" y1="156.80" x2="936.03" y2="128.30" stroke="#2d2c2d" stroke-width="1.1"/><line x1="886.67" y1="156.80" x2="936.03" y2="185.30" stroke="#2d2c2d" stroke-width="1.1"/><line x1="886.67" y1="156.80" x2="886.67" y2="213.80" stroke="#2d2c2d" stroke-width="1.1"/><line x1="886.67" y1="156.80" x2="837.31" y2="185.30" stroke="#2d2c2d" stroke-width="1.1"/><line x1="886.67" y1="156.80" x2="837.31" y2="128.30" stroke="#2d2c2d" stroke-width="1.1"/><text transform="translate(882.77 105.12) scale(1.0 1.000)" font-family="Liberation Sans" font-size="14.00" font-weight="normal" fill="#9a9a9a" >7</text><text transform="translate(932.14 133.62) scale(1.0 1.000)" font-family="Liberation Sans" font-size="14.00" font-weight="normal" fill="#9a9a9a" >8</text><text transform="translate(932.18 190.62) scale(1.0 1.000)" font-family="Liberation Sans" font-size="14.00" font-weight="normal" fill="#9a9a9a" >4</text><text transform="translate(882.78 219.12) scale(1.0 1.000)" font-family="Liberation Sans" font-size="14.00" font-weight="normal" fill="#9a9a9a" >2</text><text transform="translate(833.22 190.62) scale(1.0 1.000)" font-family="Liberation Sans" font-size="14.00" font-weight="normal" fill="#9a9a9a" >1</text><text transform="translate(833.43 133.62) scale(1.0 1.000)" font-family="Liberation Sans" font-size="14.00" font-weight="normal" fill="#9a9a9a" >5</text><circle cx="886.67" cy="156.80" r="5.4" fill="#76434a" stroke="#d8b0b0" stroke-width="1"/><text transform="translate(852.96 246.80) scale(1.0 1.060)" font-family="Liberation Mono" font-size="14.20" font-weight="bold" fill="#9ba39d" >X</text><text transform="translate(902.62 246.80) scale(1.0 1.060)" font-family="Liberation Mono" font-size="14.20" font-weight="bold" fill="#9ba39d" >FLT</text><circle cx="857.42" cy="280.80" r="23.8" fill="none" stroke="#48464a" stroke-width="3.6"/><path d="M840.59 297.63A23.8 23.8 0 0 1 857.42 257.00" fill="none" stroke="#76434a" stroke-width="3.6"/><line x1="857.42" y1="274.20" x2="857.42" y2="260.60" stroke="#fff" stroke-width="2.3"/><circle cx="857.42" cy="280.80" r="4.5" fill="#6e6b70"/><circle cx="915.62" cy="280.80" r="23.8" fill="none" stroke="#48464a" stroke-width="3.6"/><path d="M898.79 297.63A23.8 23.8 0 0 1 915.62 257.00" fill="none" stroke="#eef4ee" stroke-width="3.6"/><line x1="915.62" y1="274.20" x2="915.62" y2="260.60" stroke="#fff" stroke-width="2.3"/><circle cx="915.62" cy="280.80" r="4.5" fill="#6e6b70"/><text transform="translate(852.96 332.80) scale(1.0 1.060)" font-family="Liberation Mono" font-size="14.20" font-weight="bold" fill="#9ba39d" >Y</text><text transform="translate(902.86 332.80) scale(1.0 1.060)" font-family="Liberation Mono" font-size="14.20" font-weight="bold" fill="#9ba39d" >SDA</text><circle cx="857.42" cy="366.80" r="23.8" fill="none" stroke="#48464a" stroke-width="3.6"/><path d="M840.59 383.63A23.8 23.8 0 0 1 857.42 343.00" fill="none" stroke="#76434a" stroke-width="3.6"/><line x1="857.42" y1="360.20" x2="857.42" y2="346.60" stroke="#fff" stroke-width="2.3"/><circle cx="857.42" cy="366.80" r="4.5" fill="#6e6b70"/><circle cx="915.62" cy="366.80" r="23.8" fill="none" stroke="#48464a" stroke-width="3.6"/><line x1="910.95" y1="371.47" x2="901.34" y2="381.08" stroke="#fff" stroke-width="2.3"/><circle cx="915.62" cy="366.80" r="4.5" fill="#6e6b70"/><text transform="translate(852.97 418.80) scale(1.0 1.060)" font-family="Liberation Mono" font-size="14.20" font-weight="bold" fill="#9ba39d" >Z</text><text transform="translate(903.01 418.80) scale(1.0 1.060)" font-family="Liberation Mono" font-size="14.20" font-weight="bold" fill="#9ba39d" >SDB</text><circle cx="857.42" cy="452.70" r="23.8" fill="none" stroke="#48464a" stroke-width="3.6"/><path d="M840.59 469.53A23.8 23.8 0 0 1 857.42 428.90" fill="none" stroke="#76434a" stroke-width="3.6"/><line x1="857.42" y1="446.10" x2="857.42" y2="432.50" stroke="#fff" stroke-width="2.3"/><circle cx="857.42" cy="452.70" r="4.5" fill="#6e6b70"/><circle cx="915.62" cy="452.70" r="23.8" fill="none" stroke="#48464a" stroke-width="3.6"/><line x1="910.95" y1="457.37" x2="901.34" y2="466.98" stroke="#fff" stroke-width="2.3"/><circle cx="915.62" cy="452.70" r="4.5" fill="#6e6b70"/><rect x="842.12" y="492" width="89.5" height="58.5" rx="3" fill="#2d2b2d"/><text transform="translate(847.92 510.10) scale(1.0 1.070)" font-family="Liberation Mono" font-size="14.30" font-weight="bold" fill="#9ba39d" >X:MANUAL</text><text transform="translate(847.90 527.15) scale(1.0 1.070)" font-family="Liberation Mono" font-size="14.30" font-weight="bold" fill="#9ba39d" >Y:MANUAL</text><text transform="translate(847.31 544.20) scale(1.0 1.070)" font-family="Liberation Mono" font-size="14.30" font-weight="bold" fill="#9ba39d" >Z:MANUAL</text><rect x="819.40" y="559" width="135.20" height="29" rx="3" fill="#3a383b"/><text transform="translate(855.75 578.90) scale(1.0 1.030)" font-family="Liberation Mono" font-size="14.40" font-weight="bold" fill="#e8eee8" >PAN REC</text><rect x="866.42" y="595.4" width="19" height="420" rx="3.5" fill="#161616" stroke="#2e2c2e" stroke-width="1"/><rect x="887.42" y="595.4" width="19" height="420" rx="3.5" fill="#161616" stroke="#2e2c2e" stroke-width="1"/><rect x="887.82" y="720" width="18.1" height="2" fill="#e6e6e6"/><rect x="1091" y="63" width="1" height="942" fill="#4a484b"/><text transform="translate(1011.85 79.80) scale(1.0 1.070)" font-family="Liberation Mono" font-size="18.60" font-weight="bold" fill="#9a92d8" >T8</text><rect x="957.10" y="89" width="132.80" height="136" rx="4" fill="#0f0f0f"/><polygon points="1023.14,99.80 1072.50,128.30 1072.50,185.30 1023.14,213.80 973.78,185.30 973.78,128.30" fill="none" stroke="#2d2c2d" stroke-width="1.1"/><line x1="1023.14" y1="156.80" x2="1023.14" y2="99.80" stroke="#2d2c2d" stroke-width="1.1"/><line x1="1023.14" y1="156.80" x2="1072.50" y2="128.30" stroke="#2d2c2d" stroke-width="1.1"/><line x1="1023.14" y1="156.80" x2="1072.50" y2="185.30" stroke="#2d2c2d" stroke-width="1.1"/><line x1="1023.14" y1="156.80" x2="1023.14" y2="213.80" stroke="#2d2c2d" stroke-width="1.1"/><line x1="1023.14" y1="156.80" x2="973.78" y2="185.30" stroke="#2d2c2d" stroke-width="1.1"/><line x1="1023.14" y1="156.80" x2="973.78" y2="128.30" stroke="#2d2c2d" stroke-width="1.1"/><text transform="translate(1019.24 105.12) scale(1.0 1.000)" font-family="Liberation Sans" font-size="14.00" font-weight="normal" fill="#9a9a9a" >7</text><text transform="translate(1068.61 133.62) scale(1.0 1.000)" font-family="Liberation Sans" font-size="14.00" font-weight="normal" fill="#9a9a9a" >8</text><text transform="translate(1068.65 190.62) scale(1.0 1.000)" font-family="Liberation Sans" font-size="14.00" font-weight="normal" fill="#9a9a9a" >4</text><text transform="translate(1019.25 219.12) scale(1.0 1.000)" font-family="Liberation Sans" font-size="14.00" font-weight="normal" fill="#9a9a9a" >2</text><text transform="translate(969.69 190.62) scale(1.0 1.000)" font-family="Liberation Sans" font-size="14.00" font-weight="normal" fill="#9a9a9a" >1</text><text transform="translate(969.90 133.62) scale(1.0 1.000)" font-family="Liberation Sans" font-size="14.00" font-weight="normal" fill="#9a9a9a" >5</text><circle cx="1023.14" cy="156.80" r="5.4" fill="#9a92d8" stroke="#d8d0f0" stroke-width="1"/><text transform="translate(989.43 246.80) scale(1.0 1.060)" font-family="Liberation Mono" font-size="14.20" font-weight="bold" fill="#9ba39d" >X</text><text transform="translate(1039.09 246.80) scale(1.0 1.060)" font-family="Liberation Mono" font-size="14.20" font-weight="bold" fill="#9ba39d" >FLT</text><circle cx="993.89" cy="280.80" r="23.8" fill="none" stroke="#48464a" stroke-width="3.6"/><path d="M977.06 297.63A23.8 23.8 0 0 1 993.89 257.00" fill="none" stroke="#9a92d8" stroke-width="3.6"/><line x1="993.89" y1="274.20" x2="993.89" y2="260.60" stroke="#fff" stroke-width="2.3"/><circle cx="993.89" cy="280.80" r="4.5" fill="#6e6b70"/><circle cx="1052.09" cy="280.80" r="23.8" fill="none" stroke="#48464a" stroke-width="3.6"/><path d="M1035.26 297.63A23.8 23.8 0 0 1 1052.09 257.00" fill="none" stroke="#eef4ee" stroke-width="3.6"/><line x1="1052.09" y1="274.20" x2="1052.09" y2="260.60" stroke="#fff" stroke-width="2.3"/><circle cx="1052.09" cy="280.80" r="4.5" fill="#6e6b70"/><text transform="translate(989.43 332.80) scale(1.0 1.060)" font-family="Liberation Mono" font-size="14.20" font-weight="bold" fill="#9ba39d" >Y</text><text transform="translate(1039.33 332.80) scale(1.0 1.060)" font-family="Liberation Mono" font-size="14.20" font-weight="bold" fill="#9ba39d" >SDA</text><circle cx="993.89" cy="366.80" r="23.8" fill="none" stroke="#48464a" stroke-width="3.6"/><path d="M977.06 383.63A23.8 23.8 0 0 1 993.89 343.00" fill="none" stroke="#9a92d8" stroke-width="3.6"/><line x1="993.89" y1="360.20" x2="993.89" y2="346.60" stroke="#fff" stroke-width="2.3"/><circle cx="993.89" cy="366.80" r="4.5" fill="#6e6b70"/><circle cx="1052.09" cy="366.80" r="23.8" fill="none" stroke="#48464a" stroke-width="3.6"/><line x1="1047.42" y1="371.47" x2="1037.81" y2="381.08" stroke="#fff" stroke-width="2.3"/><circle cx="1052.09" cy="366.80" r="4.5" fill="#6e6b70"/><text transform="translate(989.44 418.80) scale(1.0 1.060)" font-family="Liberation Mono" font-size="14.20" font-weight="bold" fill="#9ba39d" >Z</text><text transform="translate(1039.48 418.80) scale(1.0 1.060)" font-family="Liberation Mono" font-size="14.20" font-weight="bold" fill="#9ba39d" >SDB</text><circle cx="993.89" cy="452.70" r="23.8" fill="none" stroke="#48464a" stroke-width="3.6"/><path d="M977.06 469.53A23.8 23.8 0 0 1 993.89 428.90" fill="none" stroke="#9a92d8" stroke-width="3.6"/><line x1="993.89" y1="446.10" x2="993.89" y2="432.50" stroke="#fff" stroke-width="2.3"/><circle cx="993.89" cy="452.70" r="4.5" fill="#6e6b70"/><circle cx="1052.09" cy="452.70" r="23.8" fill="none" stroke="#48464a" stroke-width="3.6"/><line x1="1047.42" y1="457.37" x2="1037.81" y2="466.98" stroke="#fff" stroke-width="2.3"/><circle cx="1052.09" cy="452.70" r="4.5" fill="#6e6b70"/><rect x="978.59" y="492" width="89.5" height="58.5" rx="3" fill="#2d2b2d"/><text transform="translate(984.39 510.10) scale(1.0 1.070)" font-family="Liberation Mono" font-size="14.30" font-weight="bold" fill="#9ba39d" >X:MANUAL</text><text transform="translate(984.37 527.15) scale(1.0 1.070)" font-family="Liberation Mono" font-size="14.30" font-weight="bold" fill="#9ba39d" >Y:MANUAL</text><text transform="translate(983.78 544.20) scale(1.0 1.070)" font-family="Liberation Mono" font-size="14.30" font-weight="bold" fill="#9ba39d" >Z:MANUAL</text><rect x="956.40" y="559" width="134.20" height="29" rx="3" fill="#3a383b"/><text transform="translate(992.22 578.90) scale(1.0 1.030)" font-family="Liberation Mono" font-size="14.40" font-weight="bold" fill="#e8eee8" >PAN REC</text><rect x="1002.89" y="595.4" width="19" height="420" rx="3.5" fill="#161616" stroke="#2e2c2e" stroke-width="1"/><rect x="1023.89" y="595.4" width="19" height="420" rx="3.5" fill="#161616" stroke="#2e2c2e" stroke-width="1"/><rect x="1024.29" y="720" width="18.1" height="2" fill="#e6e6e6"/><rect x="48.9" y="862" width="16.2" height="150" fill="#5a9618"/><rect x="69.8" y="884" width="16.2" height="130" fill="#79c626"/><rect x="1" y="485" width="1090" height="1" fill="#4a484b"/><text transform="translate(1143.00 81.00) scale(1.0 1.050)" font-family="Liberation Mono" font-size="14.30" font-weight="normal" fill="#c0e6c8" stroke="#c0e6c8" stroke-width="0.2">Collaborate with HATAKEN</text><text transform="translate(1220.25 99.70) scale(1.0 1.050)" font-family="Liberation Mono" font-size="14.30" font-weight="normal" fill="#8a8f8b" >v1.2.0</text><rect x="1092.5" y="107" width="310" height="285.7" rx="4" fill="#141414"/><rect x="1092" y="393" width="305" height="1" fill="#59575a"/><polygon points="1245.60,143.20 1338.61,196.90 1338.61,304.30 1245.60,358.00 1152.59,304.30 1152.59,196.90" fill="none" stroke="#3a393a" stroke-width="1.25"/><line x1="1245.60" y1="250.60" x2="1245.60" y2="143.20" stroke="#3a393a" stroke-width="1.25"/><line x1="1245.60" y1="250.60" x2="1338.61" y2="196.90" stroke="#3a393a" stroke-width="1.25"/><line x1="1245.60" y1="250.60" x2="1338.61" y2="304.30" stroke="#3a393a" stroke-width="1.25"/><line x1="1245.60" y1="250.60" x2="1245.60" y2="358.00" stroke="#3a393a" stroke-width="1.25"/><line x1="1245.60" y1="250.60" x2="1152.59" y2="304.30" stroke="#3a393a" stroke-width="1.25"/><line x1="1245.60" y1="250.60" x2="1152.59" y2="196.90" stroke="#3a393a" stroke-width="1.25"/><text transform="translate(1241.44 148.36) scale(1.0 1.000)" font-family="Liberation Sans" font-size="15.00" font-weight="bold" fill="#f4f4f4" >7</text><text transform="translate(1334.43 202.06) scale(1.0 1.000)" font-family="Liberation Sans" font-size="15.00" font-weight="bold" fill="#f4f4f4" >8</text><text transform="translate(1334.37 309.46) scale(1.0 1.000)" font-family="Liberation Sans" font-size="15.00" font-weight="bold" fill="#f4f4f4" >4</text><text transform="translate(1241.47 363.16) scale(1.0 1.000)" font-family="Liberation Sans" font-size="15.00" font-weight="bold" fill="#f4f4f4" >2</text><text transform="translate(1148.15 309.46) scale(1.0 1.000)" font-family="Liberation Sans" font-size="15.00" font-weight="bold" fill="#f4f4f4" >1</text><text transform="translate(1148.40 202.06) scale(1.0 1.000)" font-family="Liberation Sans" font-size="15.00" font-weight="bold" fill="#f4f4f4" >5</text><circle cx="1245.60" cy="250.60" r="4.3" fill="#8c80c8" stroke="#8c80c8" stroke-width="1"/><circle cx="1245.7" cy="250.9" r="4.6" fill="#e8e8e8"/><circle cx="1245.9" cy="249.5" r="4.3" fill="#8c80c8"/><text transform="translate(1137.19 413.90) scale(1.0 1.060)" font-family="Liberation Mono" font-size="14.20" font-weight="bold" fill="#9ba39d" >RETURN A</text><text transform="translate(1285.09 413.90) scale(1.0 1.060)" font-family="Liberation Mono" font-size="14.20" font-weight="bold" fill="#9ba39d" >RETURN B</text><rect x="1246" y="414" width="1" height="159" fill="#3e3c3f"/><text transform="translate(1150.49 442.90) scale(1.0 1.060)" font-family="Liberation Mono" font-size="14.20" font-weight="bold" fill="#9ba39d" >LEVEL</text><circle cx="1171.75" cy="477.00" r="23.8" fill="none" stroke="#48464a" stroke-width="3.6"/><path d="M1154.92 493.83A23.8 23.8 0 1 1 1191.20 463.28" fill="none" stroke="#eef4ee" stroke-width="3.6"/><line x1="1177.14" y1="473.20" x2="1188.26" y2="465.36" stroke="#fff" stroke-width="2.3"/><circle cx="1171.75" cy="477.00" r="4.5" fill="#6e6b70"/><text transform="translate(1146.51 528.90) scale(1.0 1.060)" font-family="Liberation Mono" font-size="14.20" font-weight="bold" fill="#9ba39d" >FILTER</text><circle cx="1171.75" cy="562.80" r="23.8" fill="none" stroke="#48464a" stroke-width="3.6"/><path d="M1154.92 579.63A23.8 23.8 0 0 1 1171.75 539.00" fill="none" stroke="#eef4ee" stroke-width="3.6"/><line x1="1171.75" y1="556.20" x2="1171.75" y2="542.60" stroke="#fff" stroke-width="2.3"/><circle cx="1171.75" cy="562.80" r="4.5" fill="#6e6b70"/><text transform="translate(1298.64 442.90) scale(1.0 1.060)" font-family="Liberation Mono" font-size="14.20" font-weight="bold" fill="#9ba39d" >LEVEL</text><circle cx="1319.90" cy="477.00" r="23.8" fill="none" stroke="#48464a" stroke-width="3.6"/><path d="M1303.07 493.83A23.8 23.8 0 1 1 1339.35 463.28" fill="none" stroke="#eef4ee" stroke-width="3.6"/><line x1="1325.29" y1="473.20" x2="1336.41" y2="465.36" stroke="#fff" stroke-width="2.3"/><circle cx="1319.90" cy="477.00" r="4.5" fill="#6e6b70"/><text transform="translate(1294.66 528.90) scale(1.0 1.060)" font-family="Liberation Mono" font-size="14.20" font-weight="bold" fill="#9ba39d" >FILTER</text><circle cx="1319.90" cy="562.80" r="23.8" fill="none" stroke="#48464a" stroke-width="3.6"/><path d="M1303.07 579.63A23.8 23.8 0 0 1 1319.90 539.00" fill="none" stroke="#eef4ee" stroke-width="3.6"/><line x1="1319.90" y1="556.20" x2="1319.90" y2="542.60" stroke="#fff" stroke-width="2.3"/><circle cx="1319.90" cy="562.80" r="4.5" fill="#6e6b70"/><rect x="1098.4" y="593" width="295" height="1" fill="#3e3c3f"/><text transform="translate(1216.25 611.70) scale(1.0 1.060)" font-family="Liberation Mono" font-size="14.20" font-weight="bold" fill="#9ba39d" >OUTPUTS</text><text transform="translate(1130.86 638.80) scale(1.0 1.060)" font-family="Liberation Mono" font-size="14.20" font-weight="bold" fill="#9ba39d" >1</text><circle cx="1134.80" cy="672.80" r="23.8" fill="none" stroke="#48464a" stroke-width="3.6"/><path d="M1117.97 689.63A23.8 23.8 0 1 1 1154.25 659.08" fill="none" stroke="#eef4ee" stroke-width="3.6"/><path d="M1123.41 693.70L1146.19 693.70A23.8 23.8 0 0 1 1123.41 693.70Z" fill="#ffffff" fill-opacity="0.12"/><line x1="1140.19" y1="669.00" x2="1151.31" y2="661.16" stroke="#fff" stroke-width="2.3"/><circle cx="1134.80" cy="672.80" r="4.5" fill="#6e6b70"/><text transform="translate(1205.13 638.80) scale(1.0 1.060)" font-family="Liberation Mono" font-size="14.20" font-weight="bold" fill="#9ba39d" >2</text><circle cx="1208.90" cy="672.80" r="23.8" fill="none" stroke="#48464a" stroke-width="3.6"/><path d="M1192.07 689.63A23.8 23.8 0 1 1 1228.35 659.08" fill="none" stroke="#eef4ee" stroke-width="3.6"/><path d="M1197.51 693.70L1220.29 693.70A23.8 23.8 0 0 1 1197.51 693.70Z" fill="#ffffff" fill-opacity="0.12"/><line x1="1214.29" y1="669.00" x2="1225.41" y2="661.16" stroke="#fff" stroke-width="2.3"/><circle cx="1208.90" cy="672.80" r="4.5" fill="#6e6b70"/><text transform="translate(1279.28 638.80) scale(1.0 1.060)" font-family="Liberation Mono" font-size="14.20" font-weight="bold" fill="#9ba39d" >3</text><circle cx="1283.00" cy="672.80" r="23.8" fill="none" stroke="#48464a" stroke-width="3.6"/><path d="M1266.17 689.63A23.8 23.8 0 1 1 1302.45 659.08" fill="none" stroke="#eef4ee" stroke-width="3.6"/><path d="M1271.61 693.70L1294.39 693.70A23.8 23.8 0 0 1 1271.61 693.70Z" fill="#ffffff" fill-opacity="0.12"/><line x1="1288.39" y1="669.00" x2="1299.51" y2="661.16" stroke="#fff" stroke-width="2.3"/><circle cx="1283.00" cy="672.80" r="4.5" fill="#6e6b70"/><text transform="translate(1353.30 638.80) scale(1.0 1.060)" font-family="Liberation Mono" font-size="14.20" font-weight="bold" fill="#9ba39d" >4</text><circle cx="1357.10" cy="672.80" r="23.8" fill="none" stroke="#48464a" stroke-width="3.6"/><path d="M1340.27 689.63A23.8 23.8 0 1 1 1376.55 659.08" fill="none" stroke="#eef4ee" stroke-width="3.6"/><path d="M1345.71 693.70L1368.49 693.70A23.8 23.8 0 0 1 1345.71 693.70Z" fill="#ffffff" fill-opacity="0.12"/><line x1="1362.49" y1="669.00" x2="1373.61" y2="661.16" stroke="#fff" stroke-width="2.3"/><circle cx="1357.10" cy="672.80" r="4.5" fill="#6e6b70"/><text transform="translate(1131.05 722.90) scale(1.0 1.060)" font-family="Liberation Mono" font-size="14.20" font-weight="bold" fill="#9ba39d" >5</text><circle cx="1134.80" cy="756.80" r="23.8" fill="none" stroke="#48464a" stroke-width="3.6"/><path d="M1117.97 773.63A23.8 23.8 0 1 1 1154.25 743.08" fill="none" stroke="#eef4ee" stroke-width="3.6"/><path d="M1123.41 777.70L1146.19 777.70A23.8 23.8 0 0 1 1123.41 777.70Z" fill="#ffffff" fill-opacity="0.12"/><line x1="1140.19" y1="753.00" x2="1151.31" y2="745.16" stroke="#fff" stroke-width="2.3"/><circle cx="1134.80" cy="756.80" r="4.5" fill="#6e6b70"/><text transform="translate(1205.10 722.90) scale(1.0 1.060)" font-family="Liberation Mono" font-size="14.20" font-weight="bold" fill="#9ba39d" >6</text><circle cx="1208.90" cy="756.80" r="23.8" fill="none" stroke="#48464a" stroke-width="3.6"/><path d="M1192.07 773.63A23.8 23.8 0 1 1 1228.35 743.08" fill="none" stroke="#eef4ee" stroke-width="3.6"/><path d="M1197.51 777.70L1220.29 777.70A23.8 23.8 0 0 1 1197.51 777.70Z" fill="#ffffff" fill-opacity="0.12"/><line x1="1214.29" y1="753.00" x2="1225.41" y2="745.16" stroke="#fff" stroke-width="2.3"/><circle cx="1208.90" cy="756.80" r="4.5" fill="#6e6b70"/><text transform="translate(1279.26 722.90) scale(1.0 1.060)" font-family="Liberation Mono" font-size="14.20" font-weight="bold" fill="#9ba39d" >7</text><circle cx="1283.00" cy="756.80" r="23.8" fill="none" stroke="#48464a" stroke-width="3.6"/><path d="M1266.17 773.63A23.8 23.8 0 1 1 1302.45 743.08" fill="none" stroke="#eef4ee" stroke-width="3.6"/><path d="M1271.61 777.70L1294.39 777.70A23.8 23.8 0 0 1 1271.61 777.70Z" fill="#ffffff" fill-opacity="0.12"/><line x1="1288.39" y1="753.00" x2="1299.51" y2="745.16" stroke="#fff" stroke-width="2.3"/><circle cx="1283.00" cy="756.80" r="4.5" fill="#6e6b70"/><text transform="translate(1353.34 722.90) scale(1.0 1.060)" font-family="Liberation Mono" font-size="14.20" font-weight="bold" fill="#9ba39d" >8</text><circle cx="1357.10" cy="756.80" r="23.8" fill="none" stroke="#48464a" stroke-width="3.6"/><path d="M1340.27 773.63A23.8 23.8 0 1 1 1376.55 743.08" fill="none" stroke="#eef4ee" stroke-width="3.6"/><path d="M1345.71 777.70L1368.49 777.70A23.8 23.8 0 0 1 1345.71 777.70Z" fill="#ffffff" fill-opacity="0.12"/><line x1="1362.49" y1="753.00" x2="1373.61" y2="745.16" stroke="#fff" stroke-width="2.3"/><circle cx="1357.10" cy="756.80" r="4.5" fill="#6e6b70"/><rect x="1098.4" y="787" width="295" height="1" fill="#3e3c3f"/><text transform="translate(1219.80 835.80) scale(1.0 1.060)" font-family="Liberation Mono" font-size="14.20" font-weight="bold" fill="#9ba39d" >MASTER</text><circle cx="1245.80" cy="919.00" r="59.6" fill="none" stroke="#48464a" stroke-width="3.9"/><path d="M1203.66 961.14A59.6 59.6 0 1 1 1294.51 884.65" fill="none" stroke="#e8c030" stroke-width="3.9"/><path d="M1218.06 972.20L1273.54 972.20A60 60 0 0 1 1218.06 972.20Z" fill="#e8c030" fill-opacity="0.32"/><line x1="1260.51" y1="908.63" x2="1287.15" y2="889.84" stroke="#fff" stroke-width="3.8"/><circle cx="1245.80" cy="919.00" r="11" fill="#6e6b70"/></svg></body></html>
